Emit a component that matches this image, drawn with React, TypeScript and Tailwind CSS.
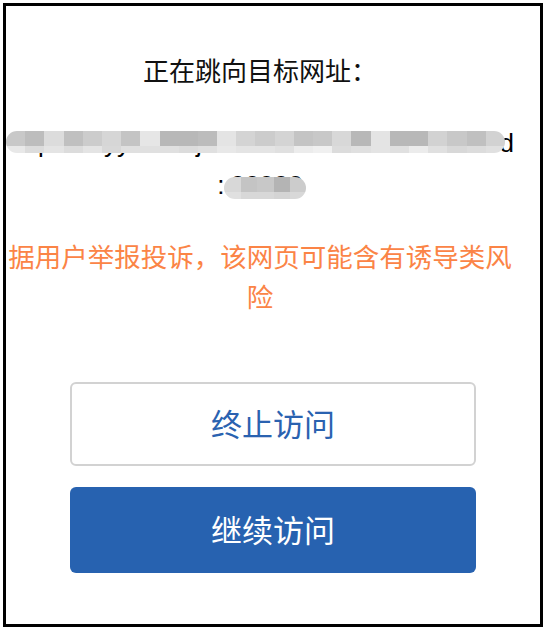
import React from "react";

const topRow = [
  "bg-[#c8c8c8]", "bg-[#bdbdbd]", "bg-[#dcdcdc]", "bg-[#c0c0c0]", "bg-[#cccccc]",
  "bg-[#d6d6d6]", "bg-[#c4c4c4]", "bg-[#e6e6e6]", "bg-[#b8b8b8]", "bg-[#b8b8b8]",
  "bg-[#bcbcbc]", "bg-[#e4e4e4]", "bg-[#d4d4d4]", "bg-[#cccccc]", "bg-[#d4d4d4]",
  "bg-[#c4c4c4]", "bg-[#c8c8c8]", "bg-[#d8d8d8]", "bg-[#b8b8b8]", "bg-[#e4e4e4]",
  "bg-[#b8b8b8]", "bg-[#b8b8b8]", "bg-[#d2d2d2]", "bg-[#c8c8c8]", "bg-[#c0c0c0]",
  "bg-[#d2d2d2]",
];

const bottomRow = [
  "bg-[#e8e8e8]", "bg-[#dcdcdc]", "bg-[#e4e4e4]", "bg-[#dcdcdc]", "bg-[#e4e4e4]",
  "bg-[#d8d8d8]", "bg-[#e0e0e0]", "bg-[#e0e0e0]", "bg-[#e0e0e0]", "bg-[#dcdcdc]",
  "bg-[#e0e0e0]", "bg-[#e8e8e8]", "bg-[#e4e4e4]", "bg-[#e4e4e4]", "bg-[#e0e0e0]",
  "bg-[#ececec]", "bg-[#f0f0f0]", "bg-[#dcdcdc]", "bg-[#e0e0e0]", "bg-[#e4e4e4]",
  "bg-[#e0e0e0]", "bg-[#ececec]", "bg-[#e0e0e0]", "bg-[#d8d8d8]", "bg-[#dcdcdc]",
  "bg-[#e0e0e0]",
];

const Mosaic = ({ top, bottom }: { top: string[]; bottom: string[] }) => (
  <div className="flex h-full w-full flex-col overflow-hidden rounded-full">
    <div className="flex h-[15px]">
      {top.map((c, i) => (
        <div key={i} className={`h-full flex-1 ${c}`} />
      ))}
    </div>
    <div className="flex flex-1">
      {bottom.map((c, i) => (
        <div key={i} className={`h-full flex-1 ${c}`} />
      ))}
    </div>
  </div>
);

export default function App() {
  return (
    <div className="min-h-screen bg-white p-[3px] font-['Noto_Sans_CJK_SC',sans-serif]">
      <div className="flex h-[624px] w-[540px] flex-col border-[3px] border-black bg-white">
        <div className="w-[508px]">
          {/* title */}
          <div className="pt-[46px] text-center text-[26px] leading-[36px] text-[#111]">
            正在跳向目标网址：
          </div>

          {/* blurred target url */}
          <div className="relative mt-[31px] h-[44px] w-[508px] overflow-hidden whitespace-nowrap font-['Liberation_Sans',sans-serif] text-[26px] leading-[44px] text-black">
            <span className="absolute right-0 top-[2px]">d</span>
            <span className="absolute left-[32px] top-[2px]">p</span>
            <span className="absolute left-[98px] top-[2px]">yy</span>
            <span className="absolute left-[190px] top-[2px]">j</span>
            <div className="absolute left-0 top-[12px] h-[22px] w-[499px]">
              <Mosaic top={topRow} bottom={bottomRow} />
            </div>
          </div>
          <div className="flex h-[44px] items-center justify-center font-['Liberation_Sans',sans-serif] text-[26px] leading-[44px] text-black">
            <span className="mr-[6px]">:</span>
            <span className="relative">
              00000
              <span className="absolute left-[-6px] top-[14px] h-[22px] w-[82px]">
                <Mosaic
                  top={["bg-[#d8d8d8]", "bg-[#c4c4c4]", "bg-[#c8c8c8]", "bg-[#b4b4b4]", "bg-[#cccccc]"]}
                  bottom={["bg-[#e0e0e0]", "bg-[#d8d8d8]", "bg-[#d8d8d8]", "bg-[#d4d4d4]", "bg-[#d8d8d8]"]}
                />
              </span>
            </span>
          </div>

          {/* warning */}
          <div className="mt-[29px] text-center text-[26.5px] leading-[40px] text-[#fb8446]">
            据用户举报投诉，该网页可能含有诱导类风险
          </div>
        </div>

        {/* actions */}
        <div className="mt-[66px] flex flex-col items-center gap-[21px]">
          <button className="flex h-[84px] w-[406px] items-center justify-center rounded-[6px] border-2 border-[#d2d2d2] bg-white pb-[2px] text-[31px] text-[#2a62b0]">
            终止访问
          </button>
          <button className="flex h-[86px] w-[406px] items-center justify-center rounded-[6px] bg-[#2762b0] pb-[2px] text-[31px] text-white">
            继续访问
          </button>
        </div>
      </div>
    </div>
  );
}
